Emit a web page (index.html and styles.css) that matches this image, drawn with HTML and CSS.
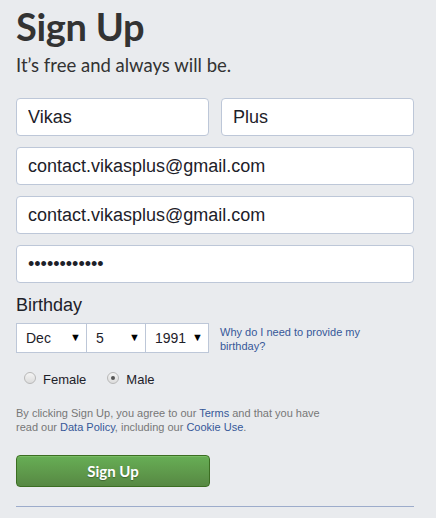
FILE: index.html
```html
<!DOCTYPE html>
<html lang="en">
<head>
  <meta charset="UTF-8" />
  <meta name="viewport" content="width=device-width, initial-scale=1.0"/>
  <title>Sign Up</title>
  <link rel="stylesheet" href="styles.css">
</head>
<body>

  <div class="signup">
    <h1>Sign Up</h1>
    <p class="tagline">It’s free and always will be.</p>

    <form class="form">
      <div class="row">
        <input class="field" type="text" value="Vikas" />
        <input class="field" type="text" value="Plus" />
      </div>
      <input class="field" type="text" value="contact.vikasplus@gmail.com" />
      <input class="field" type="text" value="contact.vikasplus@gmail.com" />
      <input class="field" type="password" value="vikasplus123" />

      <!-- birthday -->
      <div class="birthday">
        <div class="label">Birthday</div>
        <div class="bday-row">
          <div class="selects">
            <span class="sel sel-month"><select><option>Dec</option></select></span>
            <span class="sel sel-day"><select><option>5</option></select></span>
            <span class="sel sel-year"><select><option>1991</option></select></span>
          </div>
          <a class="why" href="#">Why do I need to provide my birthday?</a>
        </div>
      </div>

      <!-- gender -->
      <div class="gender">
        <label><input type="radio" name="sex" /> Female</label>
        <label><input type="radio" name="sex" checked /> Male</label>
      </div>

      <p class="terms">By clicking Sign Up, you agree to our <a href="#">Terms</a> and that you have read our <a href="#">Data Policy</a>, including our <a href="#">Cookie Use</a>.</p>

      <button type="button" class="btn">Sign Up</button>
    </form>

    <hr class="line" />
  </div>

</body>
</html>
```

FILE: styles.css
```css
body {
  margin: 0;
  background: #e9ebee;
  font-family: Arial, "Liberation Sans", sans-serif;
  color: #1d2129;
}
.signup {
  width: 398px;
  padding: 0 16px;
}
h1 {
  font-family: Lato, sans-serif;
  font-weight: bold;
  font-size: 38px;
  line-height: 44px;
  margin: 4px 0 0;
  color: #333;
  letter-spacing: -0.3px;
}
.tagline {
  font-family: Lato, sans-serif;
  font-size: 18.5px;
  line-height: 24px;
  margin: 5px 0 0;
  color: #333;
}
.form {
  margin-top: 21px;
  display: flex;
  flex-direction: column;
  gap: 11px;
}
.row {
  display: flex;
  gap: 12px;
}
.field {
  box-sizing: border-box;
  width: 100%;
  height: 38px;
  padding: 0 11px;
  border: 1px solid #bdc7d8;
  border-radius: 4px;
  background: #fff;
  font-family: Arial, "Liberation Sans", sans-serif;
  font-size: 18px;
  color: #1d2129;
}
.row .field {
  width: 193px;
}
.birthday {
  margin-top: 1px;
}
.label {
  font-size: 18px;
  line-height: 20px;
  color: #1d2129;
}
.bday-row {
  display: flex;
  align-items: flex-start;
  gap: 11px;
  margin-top: 8px;
}
.selects {
  display: flex;
}
.sel {
  position: relative;
  display: block;
}
.sel select {
  appearance: none;
  -webkit-appearance: none;
  box-sizing: border-box;
  height: 30px;
  border: 1px solid #bdc7d8;
  border-radius: 0;
  background: #fff;
  font-family: Arial, "Liberation Sans", sans-serif;
  font-size: 14px;
  color: #1d2129;
  padding: 0 0 0 9px;
}
.sel::after {
  content: "▼";
  position: absolute;
  top: 8px;
  right: 6px;
  font-size: 11px;
  color: #000;
  pointer-events: none;
}
.sel-month select { width: 71px; }
.sel-day select { width: 60px; margin-left: -1px; }
.sel-year select { width: 64px; margin-left: -1px; }
.why {
  font-size: 11px;
  line-height: 14px;
  color: #365899;
  text-decoration: none;
  width: 180px;
  margin-top: 2px;
}
.gender {
  display: flex;
  gap: 21px;
  margin-top: 8px;
  padding-left: 8px;
}
.gender label {
  display: flex;
  align-items: center;
  gap: 7px;
  font-size: 13px;
  color: #1d2129;
}
.gender input {
  appearance: none;
  -webkit-appearance: none;
  width: 12px;
  height: 12px;
  margin: 0;
  border: 1px solid #b8b8b8;
  border-radius: 50%;
  background: linear-gradient(#f4f4f4, #dcdcdc);
  position: relative;
  top: -2px;
}
.gender input:checked::after {
  content: "";
  position: absolute;
  left: 3px;
  top: 3px;
  width: 4px;
  height: 4px;
  border-radius: 50%;
  background: #555;
}
.terms {
  font-size: 11px;
  line-height: 14px;
  color: #777;
  max-width: 310px;
  margin: 8px 0 0;
}
.terms a {
  color: #365899;
  text-decoration: none;
}
.btn {
  width: 194px;
  height: 32px;
  margin-top: 10px;
  border: 1px solid #3b6e22;
  border-radius: 4px;
  background: linear-gradient(#67ae55, #578843);
  color: #fff;
  font-family: Lato, sans-serif;
  font-weight: bold;
  font-size: 15px;
  text-shadow: 0 1px 1px rgba(0, 0, 0, 0.3);
  box-shadow: inset 0 1px 0 #79bc64;
}
.line {
  border: 0;
  border-top: 1px solid #9daccb;
  margin: 19px 0 0;
}
```
